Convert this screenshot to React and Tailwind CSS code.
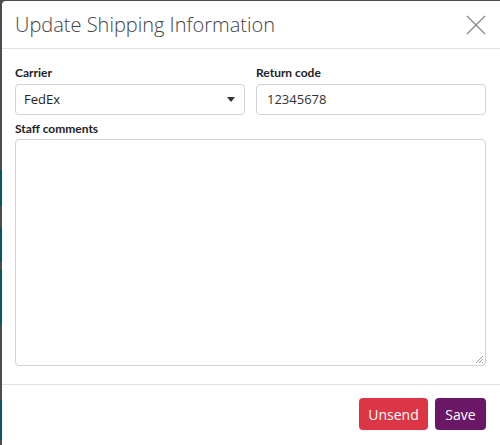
import React from "react";

export default function App() {
  return (
    <div className="relative w-[500px] h-[445px] overflow-hidden bg-[#4d4d4d]" style={{ fontFamily: '"Open Sans", "Noto Sans", sans-serif' }}>
      <div className="absolute left-0 top-[170px] w-[2px] h-[36px] bg-[#0b5560]" />
      <div className="absolute left-0 top-[228px] w-[2px] h-[34px] bg-[#0b5560]" />
      <div className="absolute left-0 top-[270px] w-[2px] h-[55px] bg-[#0b5560]" />
      <div className="absolute left-0 top-[400px] w-[2px] h-[40px] bg-[#0b5560]" />
      <div className="absolute left-[2px] top-[1px] w-[510px] h-[460px] bg-white rounded-tl-[4px] flex flex-col">
        <div className="h-[48px] flex items-center justify-between pl-[13px] pr-[26px] border-b border-[#dee2e6]">
          <h1 className="text-[20px] font-light text-[#444] tracking-[0px]">Update Shipping Information</h1>
          <svg width="20" height="20" viewBox="0 0 20 20" className="text-[#888]">
            <path d="M1 1 L19 19 M19 1 L1 19" stroke="currentColor" strokeWidth="1.3" fill="none" />
          </svg>
        </div>
        <div className="pl-[13px] pt-[15px] w-[484px] flex flex-col">
          <div className="flex gap-[11px]">
            <div className="flex-1 flex flex-col">
              <label className="text-[12px] font-bold text-[#222] leading-[17px] mb-[3px]" style={{ fontFamily: 'Lato, sans-serif' }}>Carrier</label>
              <div className="h-[31px] border border-[#ced4da] rounded-[4px] flex items-center justify-between pl-[8px] pr-[9px]">
                <span className="text-[13px] text-[#222]">FedEx</span>
                <svg width="8" height="5" viewBox="0 0 8 5"><path d="M0 0 L8 0 L4 5 Z" fill="#333" /></svg>
              </div>
            </div>
            <div className="flex-1 flex flex-col">
              <label className="text-[12px] font-bold text-[#222] leading-[17px] mb-[3px]" style={{ fontFamily: 'Lato, sans-serif' }}>Return code</label>
              <div className="h-[31px] border border-[#ced4da] rounded-[4px] flex items-center pl-[10px]">
                <span className="text-[13px] text-[#333]">12345678</span>
              </div>
            </div>
          </div>
          <label className="text-[12px] font-bold text-[#222] leading-[17px] mt-[5px] mb-[2px]" style={{ fontFamily: 'Lato, sans-serif' }}>Staff comments</label>
          <div className="relative h-[227px] border border-[#ced4da] rounded-[4px]">
            <svg className="absolute right-[1px] bottom-[1px]" width="10" height="10" viewBox="0 0 10 10">
              <path d="M9 2 L2 9 M9 5 L5 9 M9 8 L8 9" stroke="#999" strokeWidth="1" />
            </svg>
          </div>
        </div>
        <div className="mt-[18px] w-[498px] border-t border-[#dee2e6] flex justify-end gap-[7px] pt-[13px] pr-[14px]">
          <button className="h-[32px] w-[69px] rounded-[4px] bg-[#dc3545] text-white text-[14px]">Unsend</button>
          <button className="h-[32px] w-[51px] rounded-[4px] bg-[#6a1766] text-white text-[14px]">Save</button>
        </div>
      </div>
    </div>
  );
}
